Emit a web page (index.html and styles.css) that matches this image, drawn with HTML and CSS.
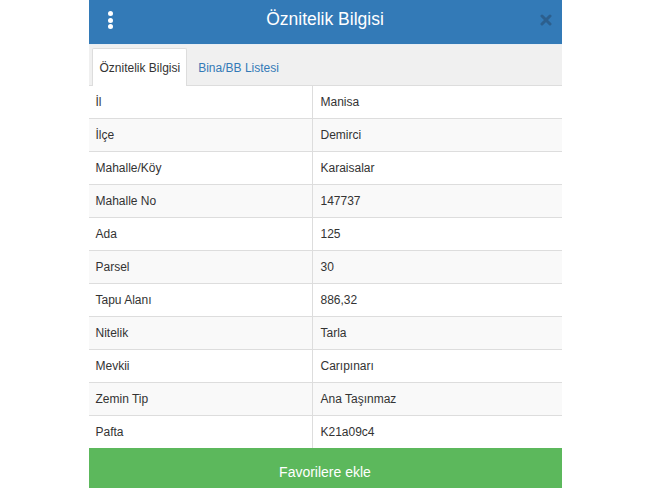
FILE: index.html
```html
<!DOCTYPE html>
<html lang="tr">
<head>
<meta charset="utf-8">
<title>Öznitelik Bilgisi</title>
<link rel="stylesheet" href="styles.css">
</head>
<body>
<div class="panel">
  <div class="header">
    <span class="menu"><i></i><i></i><i></i></span>
    <h1 class="title">Öznitelik Bilgisi</h1>
    <span class="close">
      <svg width="12" height="12" viewBox="0 0 12 12"><path d="M2 2 L10 10 M10 2 L2 10" stroke="#2c5d8a" stroke-width="3" stroke-linecap="round"/></svg>
    </span>
  </div>
  <div class="tabs">
    <div class="tab active">Öznitelik Bilgisi</div>
    <div class="tab">Bina/BB Listesi</div>
  </div>
  <table class="attrs">
    <tr><td>İl</td><td>Manisa</td></tr>
    <tr><td>İlçe</td><td>Demirci</td></tr>
    <tr><td>Mahalle/Köy</td><td>Karaisalar</td></tr>
    <tr><td>Mahalle No</td><td>147737</td></tr>
    <tr><td>Ada</td><td>125</td></tr>
    <tr><td>Parsel</td><td>30</td></tr>
    <tr><td>Tapu Alanı</td><td>886,32</td></tr>
    <tr><td>Nitelik</td><td>Tarla</td></tr>
    <tr><td>Mevkii</td><td>Carıpınarı</td></tr>
    <tr><td>Zemin Tip</td><td>Ana Taşınmaz</td></tr>
    <tr><td>Pafta</td><td>K21a09c4</td></tr>
  </table>
  <div class="fav">Favorilere ekle</div>
</div>
</body>
</html>
```

FILE: styles.css
```css
html, body {
  margin: 0;
  padding: 0;
  background: #fff;
  font-family: "Liberation Sans", Arial, sans-serif;
  color: #333;
}
.panel {
  width: 473px;
  margin: 0 auto;
  background: #fff;
}
.header {
  height: 44px;
  background: #337ab7;
  border-bottom: 1px solid #e8eef4;
  display: flex;
  align-items: center;
  justify-content: center;
  position: relative;
}
.title {
  margin: 0;
  font-size: 17.5px;
  font-weight: normal;
  color: #fff;
  line-height: 1;
  transform: translateY(-2px);
}
.menu {
  position: absolute;
  left: 19px;
  top: 11px;
  display: flex;
  flex-direction: column;
  gap: 1.5px;
}
.menu i {
  display: block;
  width: 5px;
  height: 5px;
  border-radius: 50%;
  background: #fff;
}
.close {
  position: absolute;
  right: 10px;
  top: 14px;
  display: flex;
  opacity: 0.9;
}
.tabs {
  height: 40px;
  background: #f0f0f0;
  border-bottom: 1px solid #ddd;
  display: flex;
  align-items: flex-end;
  padding-left: 3px;
}
.tab {
  height: 37px;
  box-sizing: border-box;
  padding: 0 12px 0 10px;
  display: flex;
  align-items: center;
  font-size: 12px;
  color: #337ab7;
  white-space: nowrap;
  margin-bottom: -1px;
  border: 1px solid transparent;
  border-bottom: none;
}
.tab.active {
  background: #fff;
  color: #333;
  border-color: #ddd;
  height: 38px;
  padding: 0 6px 0 7px;
  border-radius: 2px 2px 0 0;
}
.attrs {
  width: 100%;
  border-collapse: collapse;
  font-size: 12px;
}
.attrs td {
  height: 32px;
  padding: 0 7px;
  border-bottom: 1px solid #ddd;
  vertical-align: middle;
}
.attrs td:first-child {
  width: 209px;
  border-right: 1px solid #ddd;
}
.attrs td:last-child {
  padding-left: 8px;
}
.attrs tr:nth-child(even) td {
  background: #f9f9f9;
}
.attrs tr:last-child td {
  border-bottom: none;
}
.fav {
  height: 48px;
  background: #5cb85c;
  color: #fff;
  font-size: 14px;
  display: flex;
  align-items: center;
  justify-content: center;
}
```
